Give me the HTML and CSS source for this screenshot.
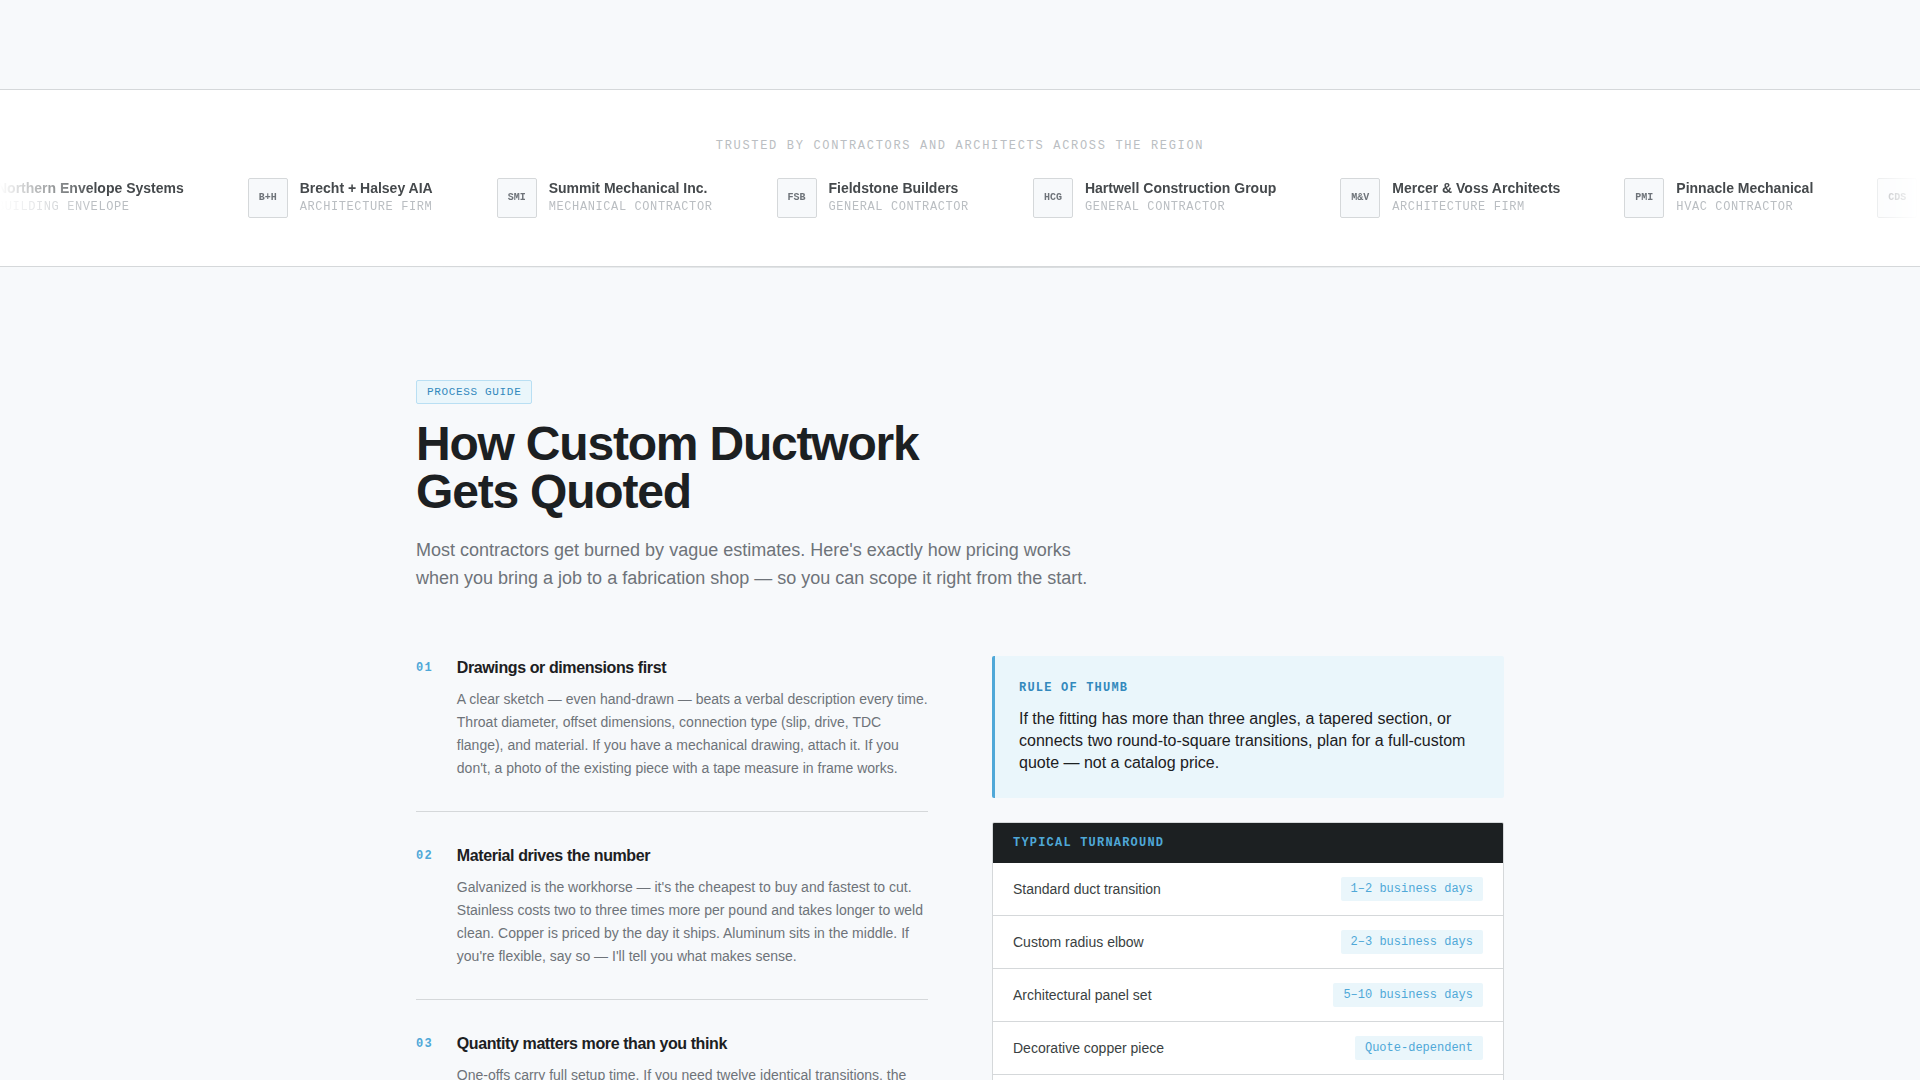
FILE: index.html
```html
<!DOCTYPE html>
<html lang="en">
<head>
<meta charset="utf-8">
<title>How Custom Ductwork Gets Quoted</title>
<link rel="stylesheet" href="styles.css">
</head>
<body>
<section class="trusted">
  <p class="trusted-label">Trusted by contractors and architects across the region</p>
  <div class="marquee">
    <ul class="marquee-track">
      <li class="client"><span class="client-mark">NES</span><div><p class="client-name">Northern Envelope Systems</p><p class="client-kind">Building Envelope</p></div></li>
      <li class="client"><span class="client-mark">B+H</span><div><p class="client-name">Brecht + Halsey AIA</p><p class="client-kind">Architecture Firm</p></div></li>
      <li class="client"><span class="client-mark">SMI</span><div><p class="client-name">Summit Mechanical Inc.</p><p class="client-kind">Mechanical Contractor</p></div></li>
      <li class="client"><span class="client-mark">FSB</span><div><p class="client-name">Fieldstone Builders</p><p class="client-kind">General Contractor</p></div></li>
      <li class="client"><span class="client-mark">HCG</span><div><p class="client-name">Hartwell Construction Group</p><p class="client-kind">General Contractor</p></div></li>
      <li class="client"><span class="client-mark">M&amp;V</span><div><p class="client-name">Mercer &amp; Voss Architects</p><p class="client-kind">Architecture Firm</p></div></li>
      <li class="client"><span class="client-mark">PMI</span><div><p class="client-name">Pinnacle Mechanical</p><p class="client-kind">HVAC Contractor</p></div></li>
      <li class="client"><span class="client-mark">CDS</span></li>
    </ul>
  </div>
</section>
<main class="guide">
  <div class="container">
    <header class="guide-head">
      <span class="badge">Process Guide</span>
      <h1>How Custom Ductwork<br>Gets Quoted</h1>
      <p class="lead">Most contractors get burned by vague estimates. Here's exactly how pricing works when you bring a job to a fabrication shop — so you can scope it right from the start.</p>
    </header>
    <div class="columns">
      <ol class="steps">
        <li class="step">
          <span class="step-num">01</span>
          <div>
            <h2>Drawings or dimensions first</h2>
            <p>A clear sketch — even hand-drawn — beats a verbal description every time. Throat diameter, offset dimensions, connection type (slip, drive, TDC flange), and material. If you have a mechanical drawing, attach it. If you don't, a photo of the existing piece with a tape measure in frame works.</p>
          </div>
        </li>
        <li class="step">
          <span class="step-num">02</span>
          <div>
            <h2>Material drives the number</h2>
            <p>Galvanized is the workhorse — it's the cheapest to buy and fastest to cut. Stainless costs two to three times more per pound and takes longer to weld clean. Copper is priced by the day it ships. Aluminum sits in the middle. If you're flexible, say so — I'll tell you what makes sense.</p>
          </div>
        </li>
        <li class="step">
          <span class="step-num">03</span>
          <div>
            <h2>Quantity matters more than you think</h2>
            <p>One-offs carry full setup time. If you need twelve identical transitions, the</p>
          </div>
        </li>
      </ol>
      <aside class="side">
        <div class="rule">
          <h2 class="rule-title">Rule of Thumb</h2>
          <p>If the fitting has more than three angles, a tapered section, or connects two round-to-square transitions, plan for a full-custom quote — not a catalog price.</p>
        </div>
        <div class="turnaround">
          <table>
            <thead><tr><th colspan="2" scope="colgroup">Typical Turnaround</th></tr></thead>
            <tbody>
              <tr><td>Standard duct transition</td><td><span class="pill">1–2 business days</span></td></tr>
              <tr><td>Custom radius elbow</td><td><span class="pill">2–3 business days</span></td></tr>
              <tr><td>Architectural panel set</td><td><span class="pill">5–10 business days</span></td></tr>
              <tr><td>Decorative copper piece</td><td><span class="pill">Quote-dependent</span></td></tr>
            </tbody>
          </table>
        </div>
      </aside>
    </div>
  </div>
</main>
</body>
</html>
```
FILE: styles.css
```css
:root {
  --ink: #1c2022;
  --body: #3a3f42;
  --muted: #6e7379;
  --faint: #babec2;
  --line: #d5d8da;
  --page: #f7f9fb;
  --blue: #4fa8d8;
  --blue-dark: #3389bd;
  --blue-pale: #eaf6fb;
  --sans: "Liberation Sans", Arial, sans-serif;
  --mono: "Liberation Mono", "Courier New", monospace;
}

* { box-sizing: border-box; margin: 0; padding: 0; }

html { scrollbar-width: none; }

body {
  background: var(--page);
  color: var(--ink);
  font-family: var(--sans);
  padding-top: 89px;
}

ul, ol { list-style: none; }

.trusted {
  background: #fff;
  border-top: 1px solid var(--line);
  border-bottom: 1px solid var(--line);
  padding: 48px 0;
}

.trusted-label {
  color: var(--faint);
  font: 12px/16px var(--mono);
  letter-spacing: 0.14em;
  text-align: center;
  text-transform: uppercase;
  margin-bottom: 24px;
}

.marquee {
  overflow: hidden;
  mask-image: linear-gradient(90deg, transparent, #000 5%, #000 95%, transparent);
}

.marquee-track {
  display: flex;
  gap: 64px;
  width: max-content;
  margin-left: -55px;
}

.client { display: flex; align-items: center; gap: 12px; white-space: nowrap; }

.client-mark {
  display: flex;
  align-items: center;
  justify-content: center;
  width: 40px;
  height: 40px;
  border: 1px solid var(--line);
  border-radius: 2px;
  background: var(--page);
  color: var(--muted);
  font: bold 10px/16px var(--mono);
}

.client-name { color: #45494c; font-size: 14px; font-weight: bold; line-height: 18px; }

.client-kind { color: var(--faint); font: 12px/20px var(--mono); letter-spacing: 0.05em; text-transform: uppercase; }

.guide::before {
  content: "";
  display: block;
  height: 1px;
  background: linear-gradient(90deg, transparent 20%, var(--line) 50%, transparent 80%);
}

.container { max-width: 1152px; margin: 0 auto; padding: 112px 32px; }

.guide-head { margin-bottom: 64px; }

.badge {
  display: inline-block;
  border: 1px solid #b9dff3;
  border-radius: 2px;
  background: var(--blue-pale);
  color: var(--blue-dark);
  font: 11px/16px var(--mono);
  letter-spacing: 0.06em;
  text-transform: uppercase;
  padding: 3px 10px;
  vertical-align: top;
}

h1 { font-size: 48px; line-height: 48px; letter-spacing: -0.025em; margin: 16px 0 20px; }

.lead { color: var(--muted); font-size: 18px; line-height: 28px; max-width: 672px; }

.columns { display: grid; grid-template-columns: 1fr 1fr; gap: 64px; }

.step {
  display: grid;
  grid-template-columns: auto 1fr;
  gap: 24px;
  border-bottom: 1px solid var(--line);
  padding-bottom: 31px;
  margin-bottom: 32px;
}

.step-num { color: var(--blue); font: bold 12px/24px var(--mono); letter-spacing: 0.1em; }

.step h2 { font-size: 16px; line-height: 24px; letter-spacing: -0.025em; margin-bottom: 8px; }

.step p { color: var(--muted); font-size: 14px; line-height: 23px; }

.side { display: flex; flex-direction: column; gap: 24px; }

.rule {
  background: var(--blue-pale);
  border-left: 3px solid var(--blue);
  border-radius: 2px;
  padding: 24px;
}

.rule-title {
  color: var(--blue-dark);
  font: bold 12px/16px var(--mono);
  letter-spacing: 0.1em;
  text-transform: uppercase;
  margin-bottom: 12px;
}

.rule p { font-size: 16px; line-height: 22px; }

.turnaround {
  background: #fff;
  border: 1px solid var(--line);
  border-radius: 2px;
  overflow: hidden;
  padding-bottom: 24px;
}

table { width: 100%; border-collapse: collapse; }

th {
  background: var(--ink);
  color: var(--blue);
  font: bold 12px/16px var(--mono);
  letter-spacing: 0.1em;
  text-align: left;
  text-transform: uppercase;
  padding: 12px 20px;
}

td { border-bottom: 1px solid var(--line); color: var(--body); font-size: 14px; line-height: 20px; padding: 14px 20px; }

td:last-child { text-align: right; }

.pill {
  display: inline-block;
  background: var(--blue-pale);
  border-radius: 2px;
  color: var(--blue);
  font: 12px/16px var(--mono);
  padding: 4px 10px;
  vertical-align: top;
}
```
